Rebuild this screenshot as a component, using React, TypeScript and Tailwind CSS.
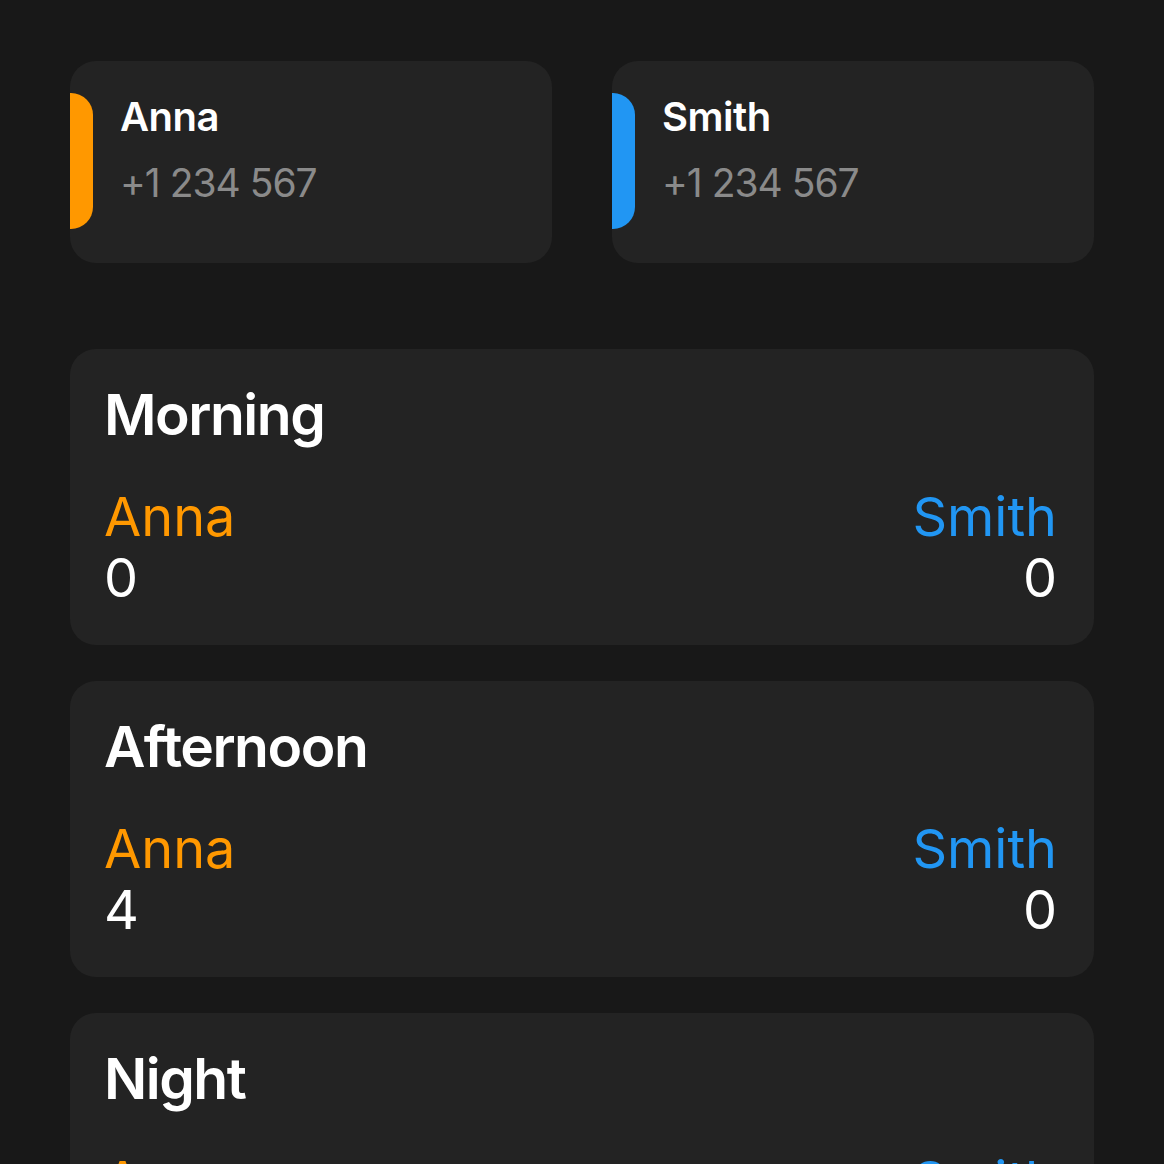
import React from "react";

const font = { fontFamily: "Inter, 'Noto Sans', sans-serif" };

function Contact({ name, color }: { name: string; color: string }) {
  return (
    <div className="flex items-start h-[202px] flex-1 rounded-[26px] bg-[#232323] overflow-hidden">
      <div className={`mt-[32px] h-[136px] w-[23px] rounded-r-[22px] ${color}`} />
      <div className="ml-[27px] pt-[36px] flex flex-col">
        <div className="text-[40px] leading-[40px] font-semibold text-white tracking-[-0.5px]">{name}</div>
        <div className="mt-[26px] text-[39px] leading-[40px] text-[#8a8a8a] tracking-[-1px]">+1 234 567</div>
      </div>
    </div>
  );
}

function Shift({ title, a, b }: { title: string; a: number; b: number }) {
  return (
    <div className="rounded-[26px] bg-[#232323] pl-[34px] pr-[37px] pt-[36px] pb-[37px] shrink-0">
      <div className="text-[57px] leading-[60px] font-semibold text-white tracking-[-1.5px]">{title}</div>
      <div className="mt-[41px] flex justify-between">
        <div className="flex flex-col">
          <div className="text-[54px] leading-[61px] text-[#ff9800]">Anna</div>
          <div className="text-[54px] leading-[61px] text-white">{a}</div>
        </div>
        <div className="flex flex-col items-end">
          <div className="text-[54px] leading-[61px] text-[#2196f3]">Smith</div>
          <div className="text-[54px] leading-[61px] text-white">{b}</div>
        </div>
      </div>
    </div>
  );
}

export default function App() {
  return (
    <div className="w-[1164px] h-[1164px] overflow-hidden bg-[#181818]" style={font}>
      <div className="px-[70px] pt-[61px] flex flex-col">
        <div className="flex gap-[60px]">
          <Contact name="Anna" color="bg-[#ff9800]" />
          <Contact name="Smith" color="bg-[#2196f3]" />
        </div>
        <div className="mt-[86px] flex flex-col gap-[36px]">
          <Shift title="Morning" a={0} b={0} />
          <Shift title="Afternoon" a={4} b={0} />
          <Shift title="Night" a={0} b={0} />
        </div>
      </div>
    </div>
  );
}
